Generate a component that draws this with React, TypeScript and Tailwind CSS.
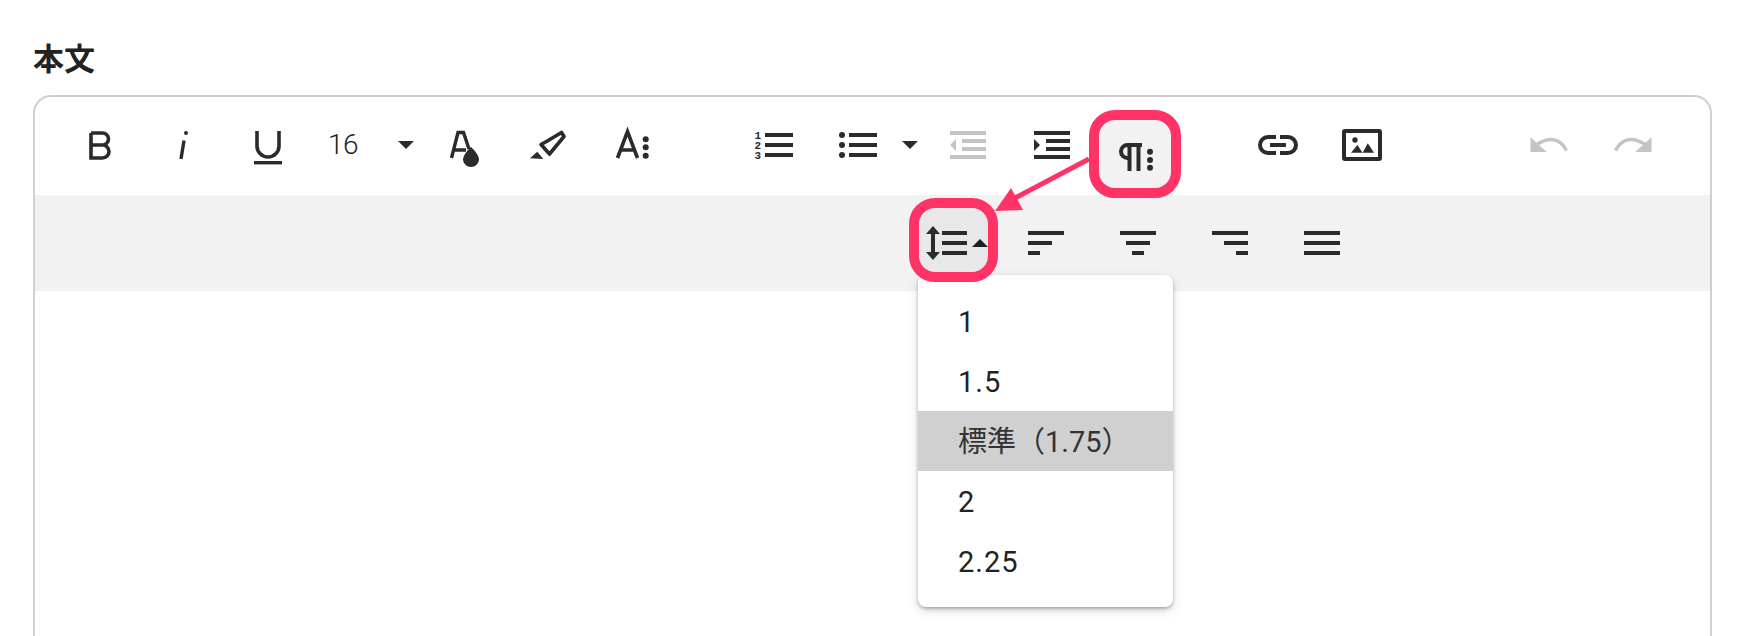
import type { ReactNode } from "react";

const Ink = "#2b2b2b";
const Off = "#c4c4c4";

function Btn({ children }: { children: ReactNode }) {
  return <div className="relative flex h-[48px] w-[84px] shrink-0 justify-center">{children}</div>;
}

function Svg({ children, w = 48 }: { children: ReactNode; w?: number }) {
  return (
    <svg width={w} height={48} viewBox={`0 0 ${w} 48`} className="relative z-30 overflow-visible" fill={Ink}>
      {children}
    </svg>
  );
}

function Caret() {
  return (
    <svg width={16} height={8} viewBox="0 0 16 8" fill={Ink} className="shrink-0">
      <path d="M0 0H16L8 8Z" />
    </svg>
  );
}

function Bars({ rows, color = Ink }: { rows: [number, number, number][]; color?: string }) {
  return (
    <>
      {rows.map(([x, y, w], i) => (
        <rect key={i} x={x} y={y} width={w} height={4} fill={color} />
      ))}
    </>
  );
}

const Highlight = ({ className }: { className: string }) => (
  <span className={`absolute z-20 rounded-[26px] border-[10px] border-[#ff3366] ${className}`} />
);

const items = ["1", "1.5", "標準（1.75）", "2", "2.25"];

export default function App() {
  return (
    <div className="relative h-[636px] w-[1742px] overflow-hidden bg-white font-[Roboto,'Noto_Sans_CJK_JP',sans-serif] text-[#222]">
      <div className="pl-[33px] pt-[39px]">
        <div className="mb-[20px] font-['Noto_Sans_CJK_JP',sans-serif] text-[31px] font-bold leading-[36px] text-[#222]">本文</div>
        <div className="h-[700px] w-[1679px] rounded-[18px] border-2 border-[#d2cfcc]">
          {/* primary toolbar */}
          <div className="flex h-[98px] pl-[23px] pr-[35px] pt-[24px]">
            <Btn>
              <Svg>
                <path d="M15 12H26.500a6 6 0 0 1 0 12H15M26.500 24a6.500 6.500 0 0 1 0 13H15V12" fill="none" stroke={Ink} strokeWidth={3.6} />
              </Svg>
            </Btn>
            <Btn>
              <Svg>
                <path d="M21 38L24 19.500" fill="none" stroke={Ink} strokeWidth={3.4} />
                <circle cx={26} cy={12} r={2} />
              </Svg>
            </Btn>
            <Btn>
              <Svg>
                <path d="M13 10V25a11 11 0 0 0 22 0V10" fill="none" stroke={Ink} strokeWidth={3.6} />
                <rect x={10} y={40} width={28} height={3.4} />
              </Svg>
            </Btn>
            <div className="flex h-[48px] w-[112px] shrink-0 items-center pl-[18px]">
              <span className="w-[70px] text-[28px] font-light leading-[48px] tracking-[-0.5px] text-[#222]">16</span>
              <Caret />
            </div>
            <Btn>
              <Svg>
                <path d="M11.500 37L18 11.500H23.500L29 28M15 29H26" fill="none" stroke={Ink} strokeWidth={3.4} />
                <path d="M31 26C31 26 23 33 23 38.500a8 7.500 0 0 0 16 0C39 33 31 26 31 26Z" />
              </Svg>
            </Btn>
            <Btn>
              <Svg>
                <path d="M17 23.500L22.500 20.500L37.500 11.500L40 15.500L25.500 33Z" fill="none" stroke={Ink} strokeWidth={3.6} strokeLinejoin="round" />
                <path d="M6 37.300L13.300 30.700L19.300 38Z" />
              </Svg>
            </Btn>
            <Btn>
              <Svg>
                <path d="M9.500 37L19.500 10.500L29.500 37M13 29H26" fill="none" stroke={Ink} strokeWidth={3.6} />
                <circle cx={37.700} cy={18.300} r={3} />
                <circle cx={37.700} cy={26.300} r={3} />
                <circle cx={37.700} cy={34.700} r={3} />
              </Svg>
            </Btn>
            <div className="ml-[58px] flex">
              <Btn>
                <Svg>
                  <Bars rows={[[15, 12, 28], [15, 22, 28], [15, 32, 28]]} />
                  <text x={4.500} y={18} fontSize={11} fontWeight={700} fontFamily="Liberation Mono, monospace">1</text>
                  <text x={4.500} y={28} fontSize={11} fontWeight={700} fontFamily="Liberation Mono, monospace">2</text>
                  <text x={4.500} y={38} fontSize={11} fontWeight={700} fontFamily="Liberation Mono, monospace">3</text>
                </Svg>
              </Btn>
              <Btn>
                <Svg>
                  <Bars rows={[[15, 12, 28], [15, 22, 28], [15, 32, 28]]} />
                  <circle cx={8} cy={14} r={3} />
                  <circle cx={8} cy={24} r={3} />
                  <circle cx={8} cy={34} r={3} />
                </Svg>
              </Btn>
              <div className="flex h-[48px] w-[26px] shrink-0 items-center pl-[2px]">
                <Caret />
              </div>
              <Btn>
                <Svg>
                  <Bars color={Off} rows={[[6, 10, 36], [18, 18, 24], [18, 26, 24], [6, 34, 36]]} />
                  <path d="M6 24L12 18V30Z" fill={Off} />
                </Svg>
              </Btn>
              <Btn>
                <Svg>
                  <Bars rows={[[6, 10, 36], [18, 18, 24], [18, 26, 24], [6, 34, 36]]} />
                  <path d="M12 24L6 18V30Z" />
                </Svg>
              </Btn>
              <Btn>
                <Highlight className="-left-[5px] -top-[11px] h-[88px] w-[92px] bg-[#f2f2f2]" />
                <Svg>
                  <path d="M30 24H15.500a6.500 6.500 0 0 0 0 13H17.500M17.500 22V50M26.500 22V50" fill="none" stroke={Ink} strokeWidth={4} />
                  <circle cx={38} cy={30.700} r={3} />
                  <circle cx={38} cy={39} r={3} />
                  <circle cx={38} cy={46.700} r={3} />
                </Svg>
              </Btn>
            </div>
            <div className="ml-[58px] flex">
              <Btn>
                <Svg>
                  <path d="M22 16H14a8 8 0 0 0 0 16H22M26 16H34a8 8 0 0 1 0 16H26M16 24H32" fill="none" stroke={Ink} strokeWidth={4} />
                </Svg>
              </Btn>
              <Btn>
                <Svg>
                  <rect x={6} y={10} width={36} height={28} rx={1} fill="none" stroke={Ink} strokeWidth={4} />
                  <circle cx={17} cy={19} r={2.700} />
                  <path d="M13 31.700L19.400 24L24.600 31.700L29.800 22.300L36 31.700Z" />
                </Svg>
              </Btn>
            </div>
            <div className="ml-auto flex">
              <Btn>
                <Svg>
                  <path d="M5.500 16.300V31H21.800Z" fill={Off} />
                  <path d="M11 24Q20 18 27 18.500Q36 19 41.500 29.500" fill="none" stroke={Off} strokeWidth={3.4} />
                </Svg>
              </Btn>
              <Btn>
                <Svg>
                  <path d="M42.500 16.300V31H26.200Z" fill={Off} />
                  <path d="M37 24Q28 18 21 18.500Q12 19 6.500 29.500" fill="none" stroke={Off} strokeWidth={3.4} />
                </Svg>
              </Btn>
            </div>
          </div>

          {/* paragraph toolbar */}
          <div className="flex h-[96px] items-center bg-[#f2f2f2] pl-[890px]">
            <div className="relative mr-[15px] h-[48px] w-[64px] shrink-0">
              <Highlight className="-left-[16px] -top-[21px] h-[84px] w-[89px] bg-[#e8e8e8]" />
              <div className="absolute -left-[7px] top-[56px] z-10 w-[255px] rounded-[8px] bg-white py-[16px] shadow-[0_2px_4px_-1px_rgba(0,0,0,0.4),0_4px_12px_rgba(0,0,0,0.12)]">
                {items.map((t, i) => (
                  <div key={t} className={`flex h-[60px] items-center pl-[40px] pt-[2px] text-[29px] font-normal leading-none ${i === 2 ? "bg-[#d0d0d0] tracking-normal text-[#333]" : "tracking-[1px] text-[#222]"}`}>
                    {t}
                  </div>
                ))}
              </div>
              <Svg w={64}>
                <path d="M8 7L15 15H10V33H15L8 41L1 33H6V15H1Z" />
                <Bars rows={[[17, 12, 25], [17, 22, 25], [17, 32, 25]]} />
                <path d="M47 28L55 20L63 28Z" fill="#1f1f1f" />
              </Svg>
            </div>
            <div className="flex gap-[8px]">
              <Btn><Svg><Bars rows={[[6, 12, 36], [6, 22, 24], [6, 32, 12]]} /></Svg></Btn>
              <Btn><Svg><Bars rows={[[6, 12, 36], [12, 22, 24], [18, 32, 12]]} /></Svg></Btn>
              <Btn><Svg><Bars rows={[[6, 12, 36], [18, 22, 24], [30, 32, 12]]} /></Svg></Btn>
              <Btn><Svg><Bars rows={[[6, 12, 36], [6, 22, 36], [6, 32, 36]]} /></Svg></Btn>
            </div>
          </div>
        </div>
      </div>

      {/* annotation arrow */}
      <svg className="absolute left-[990px] top-[150px] z-40" width={105} height={65} viewBox="0 0 105 65">
        <path d="M99 9L25 48" stroke="#ff3366" strokeWidth={5} fill="none" />
        <path d="M5 61L21 38L33 60Z" fill="#ff3366" />
      </svg>
    </div>
  );
}
